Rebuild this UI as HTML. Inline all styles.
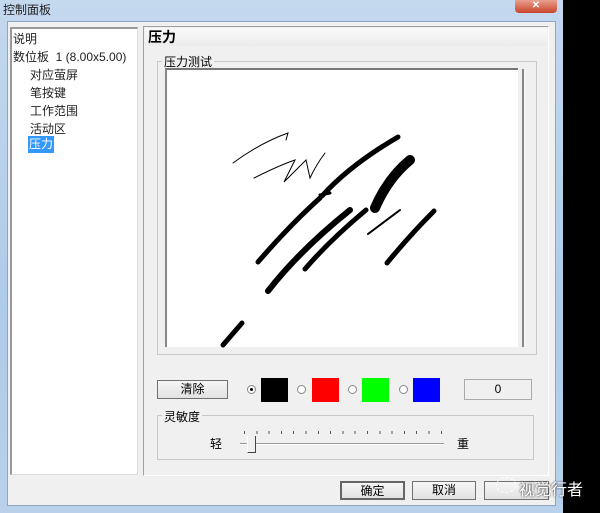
<!DOCTYPE html>
<html><head><meta charset="utf-8"><style>
*{margin:0;padding:0;box-sizing:border-box}
body{width:600px;height:513px;background:#000;position:relative;overflow:hidden;font-family:"Liberation Sans","Noto Sans CJK SC",sans-serif;font-size:12px;color:#000}
.a{position:absolute;white-space:nowrap}
#win{left:0;top:0;width:563px;height:513px;background:linear-gradient(180deg,#c4d8ee,#aecbe8 60%,#b9d1ea);}
#client{left:7px;top:21px;width:549px;height:485px;background:#f0f0f0;border:1px solid #8ea6c4}
.btn{background:linear-gradient(#f6f6f6,#e2e2e2);border:1px solid #707070;text-align:center;line-height:17px}
.radio{width:9px;height:9px;border-radius:50%;border:1px solid #888;background:#fff}
</style></head><body>
<div id="win" class="a"></div>
<div class="a" style="left:3px;top:1px;font-size:12px;color:#222">控制面板</div>
<div class="a" style="left:515px;top:0;width:42px;height:13px;background:linear-gradient(#e9a08f,#c9442c);border-radius:0 0 4px 4px;color:#fff;font-size:10px;text-align:center;line-height:11px;font-weight:bold">✕</div>
<div id="client" class="a"></div>
<div class="a" style="left:10px;top:27px;width:128px;height:448px;background:#fff;border-left:2px solid #999;border-top:2px solid #999;border-right:1px solid #ddd;border-bottom:1px solid #ddd"></div>
<div class="a" style="left:13px;top:30px;line-height:18px;font-size:12px;color:#222">说明<br>数位板&nbsp; 1 (8.00x5.00)</div>
<div class="a" style="left:30px;top:66px;line-height:18px;font-size:12px;color:#222">对应萤屏<br>笔按键<br>工作范围<br>活动区</div>
<div class="a" style="left:28px;top:136px;width:26px;height:17px;background:#3399ff;color:#fff;padding-left:1px;line-height:17px">压力</div>
<div class="a" style="left:143px;top:26px;width:406px;height:450px;border:1px solid #a0a0a0;border-right-color:#fff;border-bottom-color:#fff"></div>
<div class="a" style="left:145px;top:28px;width:402px;height:18px;background:linear-gradient(#fafafa,#ececec);font-weight:bold;font-size:14px;line-height:18px;padding-left:3px">压力</div>
<div class="a" style="left:157px;top:61px;width:380px;height:294px;border:1px solid #c8c8c8"></div>
<div class="a" style="left:162px;top:53px;background:#f0f0f0;padding:0 2px;font-size:12px">压力测试</div>
<div class="a" style="left:165px;top:68px;width:353px;height:279px;background:#fff;border-top:2px solid #777;border-left:2px solid #888"></div>
<div class="a" style="left:522px;top:69px;width:4px;height:278px;border-left:2px solid #888;background:#f4f4f4"></div>
<svg class="a" style="left:0;top:0" width="600" height="513">
<g fill="none" stroke="#000" stroke-linecap="round">
<path d="M233 163 Q260 143 288 133 L286 140" stroke-width="1"/>
<path d="M254 178 Q280 165 295 160 L284 182 L306 160 L310 178 Q316 165 325 153" stroke-width="1"/>
<path d="M258 262 Q290 225 320 198" stroke-width="5"/>
<path d="M322 196 Q350 165 398 137" stroke-width="5"/>
<path d="M320 195 L330 193" stroke-width="3"/>
<path d="M375 208 Q388 178 410 160" stroke-width="10"/>
<path d="M268 291 Q300 250 350 210" stroke-width="6"/>
<path d="M305 269 Q330 240 366 210" stroke-width="5"/>
<path d="M368 234 L400 210" stroke-width="2"/>
<path d="M387 263 Q410 235 434 211" stroke-width="5"/>
<path d="M223 345 L242 323" stroke-width="5"/>
</g>
</svg>
<div class="a btn" style="left:157px;top:380px;width:71px;height:19px">清除</div>
<div class="a radio" style="left:247px;top:385px"></div><div class="a" style="left:250px;top:388px;width:3px;height:3px;background:#000;border-radius:50%"></div>
<div class="a" style="left:261px;top:378px;width:27px;height:24px;background:#000"></div>
<div class="a radio" style="left:297px;top:385px"></div>
<div class="a" style="left:312px;top:378px;width:27px;height:24px;background:#f00"></div>
<div class="a radio" style="left:348px;top:385px"></div>
<div class="a" style="left:362px;top:378px;width:27px;height:24px;background:#0f0"></div>
<div class="a radio" style="left:399px;top:385px"></div>
<div class="a" style="left:413px;top:378px;width:27px;height:24px;background:#00f"></div>
<div class="a" style="left:464px;top:379px;width:68px;height:21px;border:1px solid #aaa;text-align:center;line-height:19px">0</div>
<div class="a" style="left:157px;top:415px;width:377px;height:45px;border:1px solid #c8c8c8"></div>
<div class="a" style="left:162px;top:408px;background:#f0f0f0;padding:0 2px">灵敏度</div>
<div class="a" style="left:210px;top:435px">轻</div>
<div class="a" style="left:457px;top:435px">重</div>
<div class="a" style="left:240px;top:443px;width:204px;height:2px;border-top:1px solid #999;border-bottom:1px solid #fff"></div>
<div class="a" style="left:244px;top:431px;width:202px;height:3px;background:repeating-linear-gradient(90deg,#555 0 1px,transparent 1px 12.3px)"></div>
<div class="a" style="left:247px;top:436px;width:9px;height:17px;background:#f0f0f0;border-right:1px solid #444;border-bottom:1px solid #444;border-left:1px solid #fff"></div>
<div class="a btn" style="left:340px;top:481px;width:65px;height:19px;border:2px solid #666">确定</div>
<div class="a btn" style="left:412px;top:481px;width:64px;height:19px">取消</div>
<div class="a btn" style="left:484px;top:481px;width:65px;height:19px"></div>
<div class="a" style="left:496px;top:477px;width:20px;height:16px;border:1px dashed #fff;border-radius:50%"></div>
<div class="a" style="left:519px;top:476px;color:#fff;font-size:16px;text-shadow:0 0 2px #000">视觉行者</div>
</body></html>
